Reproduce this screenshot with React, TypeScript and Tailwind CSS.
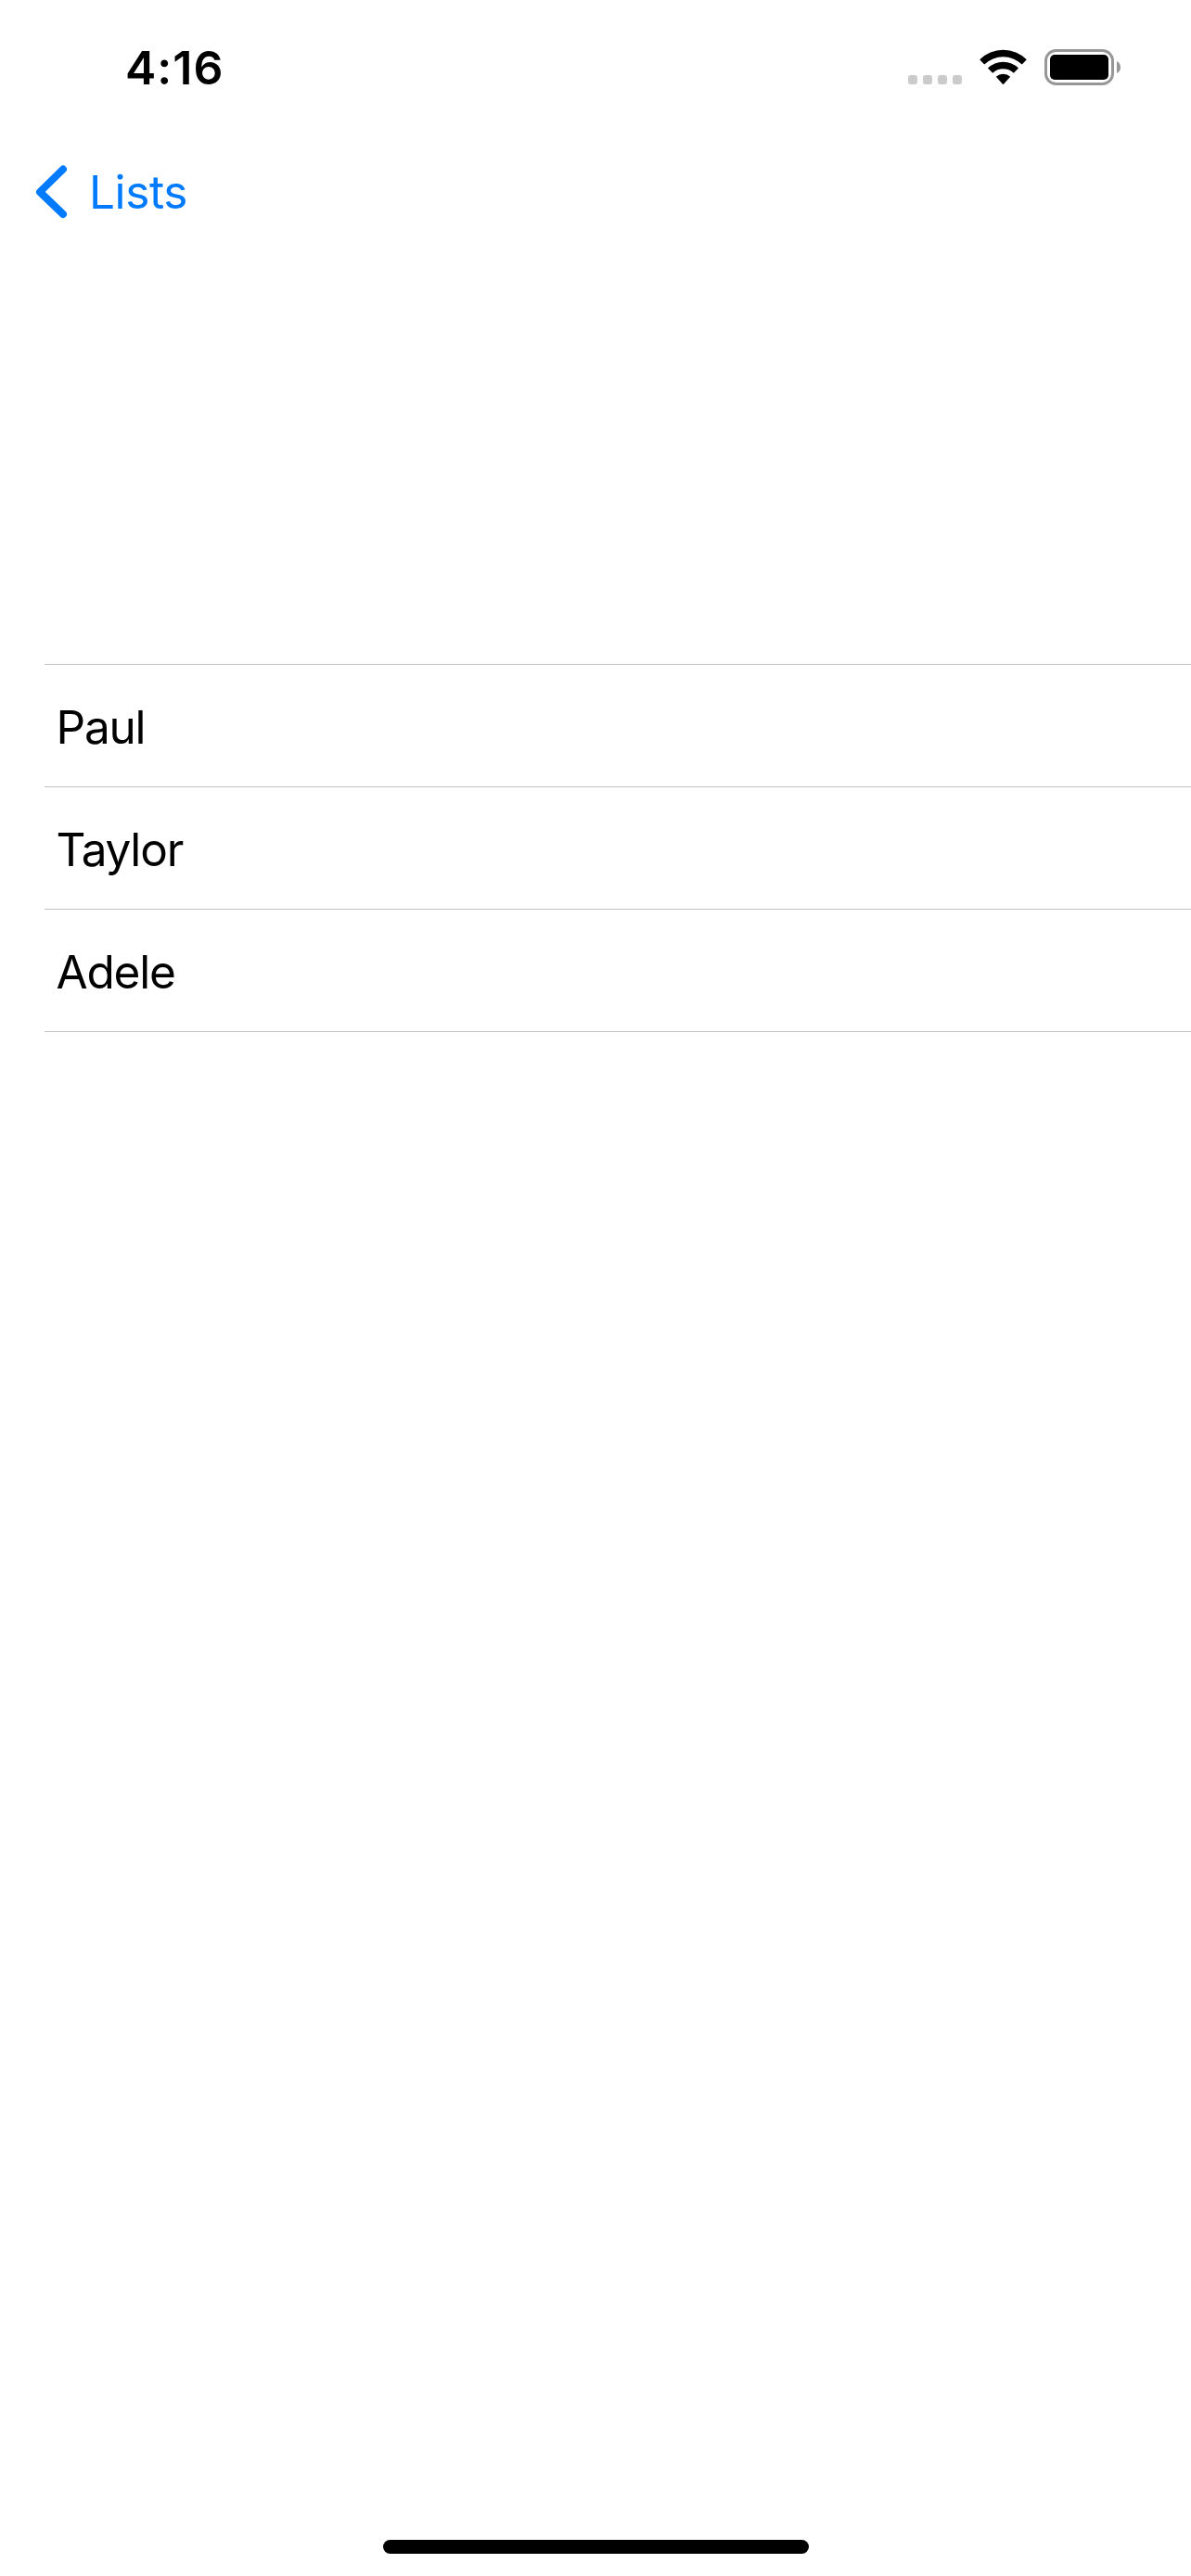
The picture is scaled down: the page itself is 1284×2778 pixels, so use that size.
function StatusIcons() {
  return (
    <div className="flex items-start pt-[53px]">
      <div className="mt-[28px] flex gap-[6px]">
        {[0, 1, 2, 3].map((dot) => (
          <span key={dot} className="size-[10px] rounded-[3px] bg-[#cbcbcb]" />
        ))}
      </div>
      <svg className="ml-[18px]" width="53" height="40" viewBox="0 0 53 40" fill="currentColor">
        <path d="M1.2 11.2A36 36 0 0 1 51.8 11.2L46.8 16.6A29 29 0 0 0 6.2 16.6Z" />
        <path d="M10 20.4A23.5 23.5 0 0 1 43 20.4L37.8 25.8A16.5 16.5 0 0 0 15.2 25.8Z" />
        <path d="M18.8 29.8A11.5 11.5 0 0 1 34.2 29.8L26.5 38.2Z" />
      </svg>
      <svg className="ml-[18px]" width="83" height="39" viewBox="0 0 83 39">
        <rect x="1.5" y="1.5" width="72" height="36" rx="11" fill="none" stroke="#979797" strokeWidth="3" />
        <rect x="6" y="6" width="63" height="27" rx="5" />
        <path d="M78 13Q82 15 82 19.5T78 26Z" fill="#979797" />
      </svg>
    </div>
  );
}

export default function App() {
  return (
    <div className="flex h-[2778px] w-[1284px] flex-col overflow-hidden bg-white font-['Inter',sans-serif] text-black">
      <header className="flex h-[141px] items-start justify-between pr-[75px] pl-[135px]">
        <span className="pt-[49px] text-[50px] leading-[48px] font-semibold tracking-[1px]">4:16</span>
        <StatusIcons />
      </header>
      <nav className="flex h-[132px] pt-[36px] pl-[38px] text-[#007aff]">
        <svg width="36" height="60" fill="none" stroke="currentColor" strokeWidth="8" strokeLinecap="round" strokeLinejoin="round">
          <path d="M30 5.5 L5 30 L30 54" />
        </svg>
        <span className="ml-[22px] text-[49.5px] leading-[60px] tracking-[-0.4px]">Lists</span>
      </nav>
      <ul className="mt-[443px] ml-[48px] border-t border-[#c3c3c5]">
        {["Paul", "Taylor", "Adele"].map((name) => (
          <li key={name} className="h-[132px] border-b border-[#c3c3c5] pt-px pl-[12.5px] text-[49.5px] leading-[132px] tracking-[-1.2px]">
            {name}
          </li>
        ))}
      </ul>
      <div className="mx-auto mt-auto mb-[24px] h-[15px] w-[459px] rounded-full bg-black" />
    </div>
  );
}
